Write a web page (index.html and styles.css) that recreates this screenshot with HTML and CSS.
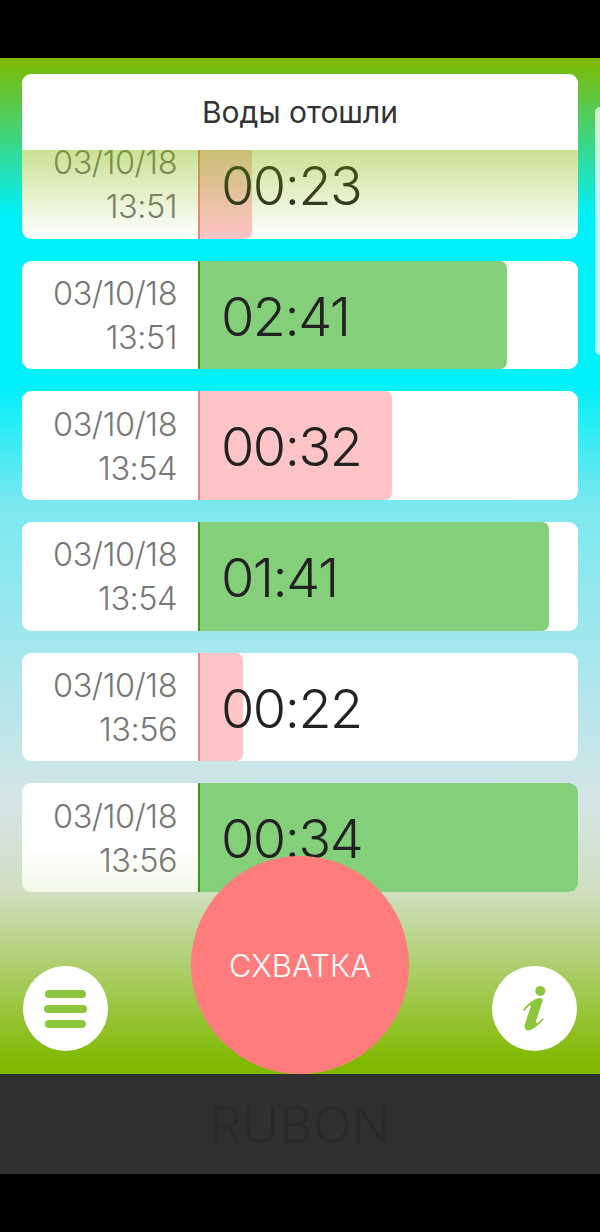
FILE: index.html
```html
<!DOCTYPE html>
<html lang="en">
<head>
    <meta charset="UTF-8">
    <meta name="viewport" content="width=device-width, initial-scale=1.0">
    <title>Схватки</title>
    <link rel="stylesheet" href="styles.css">
</head>

<body>
    <div class="screen">
        <div class="sidePeek"></div>
        <button class="waterBtn">Воды отошли</button>

        <div class="list">
            <div class="row">
                <div class="date">03/10/18<br>13:51</div>
                <div class="track">
                    <div class="bar pause" style="width: 14.2%"></div>
                    <div class="value">00:23</div>
                </div>
            </div>
            <div class="row">
                <div class="date">03/10/18<br>13:51</div>
                <div class="track">
                    <div class="bar contraction" style="width: 81.3%"></div>
                    <div class="value">02:41</div>
                </div>
            </div>
            <div class="row">
                <div class="date">03/10/18<br>13:54</div>
                <div class="track">
                    <div class="bar pause" style="width: 51%"></div>
                    <div class="value">00:32</div>
                </div>
            </div>
            <div class="row">
                <div class="date">03/10/18<br>13:54</div>
                <div class="track">
                    <div class="bar contraction" style="width: 92.4%"></div>
                    <div class="value">01:41</div>
                </div>
            </div>
            <div class="row">
                <div class="date">03/10/18<br>13:56</div>
                <div class="track">
                    <div class="bar pause" style="width: 11.9%"></div>
                    <div class="value">00:22</div>
                </div>
            </div>
            <div class="row">
                <div class="date">03/10/18<br>13:56</div>
                <div class="track">
                    <div class="bar contraction" style="width: 100%"></div>
                    <div class="value">00:34</div>
                </div>
            </div>
        </div>

        <div class="fadeTop"></div>
        <div class="fadeBottom"></div>

        <div class="controls">
            <button class="roundBtn">
                <svg width="85" height="85" viewBox="0 0 85 85">
                    <rect x="22" y="24" width="41" height="8" rx="4" fill="#8cc63f"/>
                    <rect x="21" y="39" width="43" height="8" rx="4" fill="#8cc63f"/>
                    <rect x="22" y="54" width="41" height="8" rx="4" fill="#8cc63f"/>
                </svg>
            </button>
            <button class="mainBtn">СХВАТКА</button>
            <button class="roundBtn">
                <svg width="85" height="85" viewBox="0 0 85 85">
                    <circle cx="48.3" cy="25" r="5" fill="#8cc63f"/>
                    <path d="M31 44 C35 38 42 33 47 32 C50 31.5 51 33 50.5 35 L44 55 C43.5 58 45 58 51 52 L51.5 53.5 C46 60 40 64.5 36 64.5 C33 64.5 32 62 33 58 L38.5 41 C39 38 37 39 32.5 45 Z" fill="#8cc63f"/>
                </svg>
            </button>
        </div>
    </div>

    <div class="footer">RUBON</div>
</body>
</html>
```

FILE: styles.css
```css
body {
    margin: 0;
    padding: 58px 0 58px;
    background-color: #000;
    font-family: Inter, "Liberation Sans", sans-serif;
    color: #333;
}

button {
    border: none;
    padding: 0;
    font-family: inherit;
}

.screen {
    position: relative;
    height: 1016px;
    overflow: hidden;
    padding: 16px 22px 0;
    box-sizing: border-box;
    background: linear-gradient(to bottom,
        #80b900 0%,
        #00f0fa 15.5%,
        #00f0fa 32%,
        #7be8f0 44%,
        #9ae8ee 55%,
        #d5e5e8 73%,
        #d0dfc0 82%,
        #80b900 99%);
}

.sidePeek {
    position: absolute;
    top: 49px;
    right: 0;
    width: 5px;
    height: 248px;
    background-color: rgba(255, 255, 255, 0.72);
    border-radius: 6px 0 0 6px;
}

.waterBtn {
    position: relative;
    z-index: 3;
    display: block;
    width: 100%;
    height: 76px;
    margin-bottom: -20px;
    border-radius: 9px;
    background-color: #fff;
    color: #333;
    font-size: 30px;
}

.list {
    display: flex;
    flex-direction: column;
    gap: 22px;
}

.row {
    display: flex;
    height: 108.7px;
    border-radius: 9px;
    background-color: #fff;
    overflow: hidden;
}

.date {
    flex: 0 0 155px;
    padding: 2px 21px 0 0;
    text-align: right;
    font-size: 32.5px;
    font-weight: 300;
    letter-spacing: -0.5px;
    line-height: 44px;
    color: #777;
    align-self: center;
}

.track {
    flex: 1;
    display: grid;
}

.bar {
    grid-area: 1 / 1;
    box-sizing: border-box;
    border-radius: 0 7px 7px 0;
}

.bar.pause {
    background-color: #ffc4c6;
    border-left: 2px solid #f08080;
}

.bar.contraction {
    background-color: #84d07a;
    border-left: 2px solid #3a9a10;
}

.value {
    grid-area: 1 / 1;
    align-self: center;
    padding: 2px 0 0 23px;
    font-size: 54px;
    font-weight: 300;
    letter-spacing: -1.5px;
    color: #222;
}

.fadeTop {
    position: absolute;
    z-index: 2;
    top: 92px;
    left: 22px;
    right: 22px;
    height: 88px;
    background: linear-gradient(to bottom, rgba(128, 185, 0, 0.42), rgba(128, 185, 0, 0));
}

.fadeBottom {
    position: absolute;
    z-index: 2;
    top: 790px;
    left: 22px;
    width: 176px;
    height: 44px;
    border-radius: 0 0 0 9px;
    background: linear-gradient(to bottom, rgba(128, 185, 0, 0), rgba(128, 185, 0, 0.1));
}

.controls {
    position: relative;
    z-index: 3;
    display: flex;
    justify-content: space-between;
    align-items: flex-end;
    margin-top: -36px;
    padding: 0 1px;
}

.roundBtn {
    width: 85px;
    height: 85px;
    margin-bottom: 23px;
    border-radius: 50%;
    background-color: #fff;
}

.roundBtn svg {
    display: block;
}

.mainBtn {
    width: 218px;
    height: 218px;
    border-radius: 50%;
    background-color: #ff7c7c;
    color: #fff;
    font-size: 31px;
    font-weight: 300;
}

.footer {
    height: 100px;
    background-color: #303030;
    color: #2a2a2a;
    font-size: 51px;
    font-weight: 300;
    letter-spacing: 0.2px;
    line-height: 102px;
    text-align: center;
}
```
